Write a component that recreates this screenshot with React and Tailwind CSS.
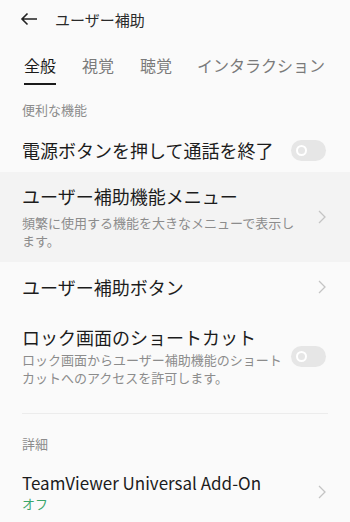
import React from "react";

const font = { fontFamily: '"Noto Sans CJK JP", "Noto Sans", sans-serif' };

function Toggle() {
  return (
    <div className="w-[35px] h-[21px] rounded-full bg-[#e6e6e6] flex items-center pl-[5px] shrink-0">
      <div className="w-[11px] h-[11px] rounded-full border-[2.5px] border-white" />
    </div>
  );
}

function Chevron() {
  return (
    <svg width="8" height="14" viewBox="0 0 8 14" className="shrink-0">
      <path d="M1 1l6 6-6 6" fill="none" stroke="#c4c4c4" strokeWidth="1.3" />
    </svg>
  );
}

export default function App() {
  return (
    <div
      className="w-[350px] h-[522px] bg-[#fafafa] text-[#1c1c1c] overflow-hidden antialiased"
      style={font}
    >
      {/* header */}
      <div className="flex items-center h-[38px] pl-[20px]">
        <svg width="18" height="14" viewBox="0 0 18 14">
          <path d="M17 7H2M7.5 1.5L2 7l5.5 5.5" fill="none" stroke="#222" strokeWidth="1.6" />
        </svg>
        <span className="ml-[17px] text-[15px] leading-none text-[#2a2a2a]">ユーザー補助</span>
      </div>

      {/* tabs */}
      <div className="flex items-start pl-[24px] pt-[15px] text-[16px] text-[#7a7a7a]">
        <div className="flex flex-col">
          <span className="leading-[24px] text-[#1a1a1a]">全般</span>
          <div className="mt-[6px] h-[2px] bg-[#1a1a1a] w-[32px]" />
        </div>
        <span className="ml-[26px] leading-[24px]">視覚</span>
        <span className="ml-[26px] leading-[24px]">聴覚</span>
        <span className="ml-[25px] leading-[24px]">インタラクション</span>
      </div>

      <div className="px-[22px] pt-[16px] pb-[9px] text-[13px] leading-[18px] text-[#8c8c8c]">便利な機能</div>

      <div className="flex items-center justify-between pl-[22px] pr-[24px] h-[44px]">
        <span className="text-[18px] leading-[24px]">電源ボタンを押して通話を終了</span>
        <Toggle />
      </div>

      <div className="flex items-center justify-between bg-[#f3f3f3] pl-[22px] pr-[24px] pt-[12px] pb-[12px]">
        <div className="flex flex-col w-[282px]">
          <span className="text-[18px] leading-[24px]">ユーザー補助機能メニュー</span>
          <span className="mt-[6px] text-[13px] leading-[18px] text-[#8c8c8c]">
            頻繁に使用する機能を大きなメニューで表示します。
          </span>
        </div>
        <Chevron />
      </div>

      <div className="flex items-center justify-between pl-[22px] pr-[24px] h-[50px]">
        <span className="text-[18px] leading-[24px]">ユーザー補助ボタン</span>
        <Chevron />
      </div>

      <div className="flex items-center justify-between pl-[22px] pr-[24px] pt-[13px]">
        <div className="flex flex-col w-[262px]">
          <span className="text-[18px] leading-[24px]">ロック画面のショートカット</span>
          <span className="mt-[2px] text-[13px] leading-[18px] text-[#8c8c8c]">
            ロック画面からユーザー補助機能のショートカットへのアクセスを許可します。
          </span>
        </div>
        <Toggle />
      </div>

      <div className="mx-[22px] mt-[26px] h-px bg-[#ececec]" />

      <div className="px-[22px] pt-[21px] text-[13px] leading-[18px] text-[#8c8c8c]">詳細</div>

      <div className="flex items-center justify-between pl-[22px] pr-[24px] pt-[18px]">
        <div className="flex flex-col">
          <span className="text-[17px] leading-[24px]">TeamViewer Universal Add-On</span>
          <span className="text-[13px] leading-[18px] text-[#3aa66a]">オフ</span>
        </div>
        <Chevron />
      </div>
    </div>
  );
}
